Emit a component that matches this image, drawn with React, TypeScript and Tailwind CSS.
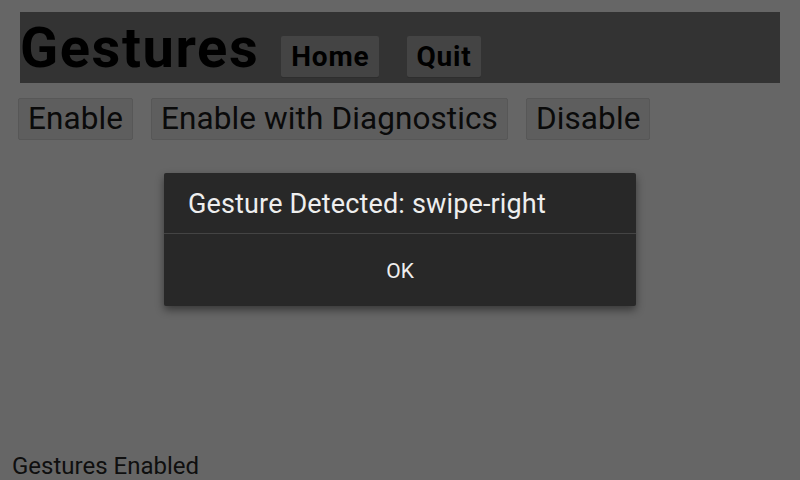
const rowButtons = ["Enable", "Enable with Diagnostics", "Disable"];

export default function App() {
  return (
    <div
      className="relative flex h-[480px] w-[800px] flex-col overflow-hidden bg-[#666666] text-[#0a0a0a]"
      style={{ fontFamily: "Roboto, 'Liberation Sans', sans-serif" }}
    >
      {/* Header */}
      <div className="ml-5 mt-3 flex h-[71px] w-[760px] items-center bg-[#333333]">
        <h1 className="text-[56px] font-bold leading-none tracking-[1.6px] text-black">Gestures</h1>
        <button className="mb-[6px] ml-[22px] flex h-[41px] items-center self-end rounded-[2px] bg-[#444444] px-[10px] text-[28px] font-bold tracking-[0.8px] text-black shadow-[0_1px_0_#2e2e2e]">
          Home
        </button>
        <button className="mb-[6px] ml-[28px] flex h-[41px] items-center self-end rounded-[2px] bg-[#444444] px-[9px] text-[28px] font-bold tracking-[0.8px] text-black shadow-[0_1px_0_#2e2e2e]">
          Quit
        </button>
      </div>

      {/* Controls */}
      <div className="ml-[18px] mt-[15px] flex gap-[18px]">
        {rowButtons.map((label) => (
          <button
            key={label}
            className="flex h-[42px] items-center rounded-[2px] border border-[#575757] bg-[#5e5e5e] px-[9px] text-[31.5px] tracking-[0.1px] text-[#0a0a0a]"
          >
            {label}
          </button>
        ))}
      </div>

      {/* Status */}
      <div className="mt-auto mb-[2px] ml-3 text-[24px] leading-[24px] text-[#0f0f0f]">Gestures Enabled</div>

      {/* Dialog */}
      <div className="absolute left-[164px] top-[173px] w-[472px] rounded-[2px] bg-[#282828] shadow-[0_4px_8px_rgba(0,0,0,0.45)]">
        <div className="flex h-[61px] items-center border-b border-[#444444] pl-6 pt-[3px] text-[27px] tracking-[0.15px] text-[#eeeeee]">
          Gesture Detected: swipe-right
        </div>
        <div className="flex h-[72px] items-center justify-center pt-[3px] text-[21px] text-[#eeeeee]">OK</div>
      </div>
    </div>
  );
}
